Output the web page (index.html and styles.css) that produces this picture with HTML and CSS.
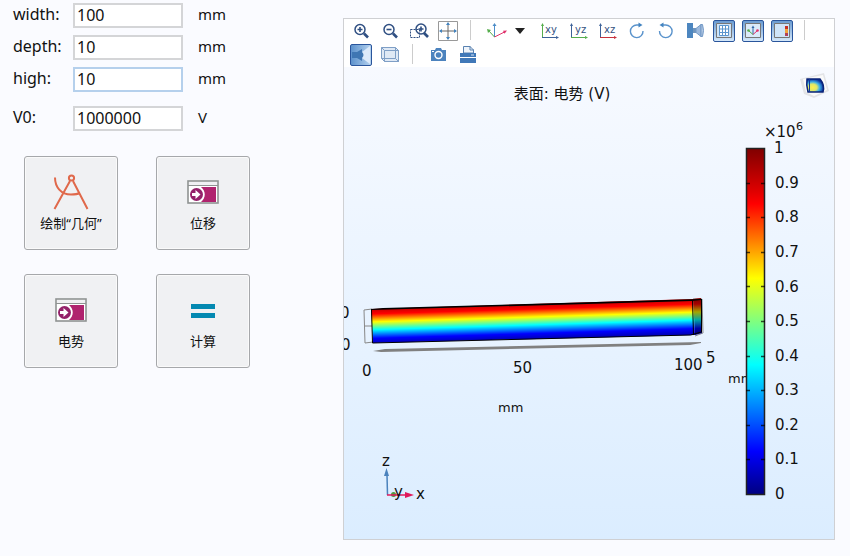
FILE: index.html
```html
<!DOCTYPE html>
<html lang="zh">
<head>
  <meta charset="UTF-8">
  <title>电势</title>
  <link rel="stylesheet" href="styles.css">
</head>
<body>
  <main class="app">
    <section class="side">
      <form class="params">
        <div class="param">
          <label for="width">width:</label>
          <input type="text" id="width" value="100">
          <span class="unit">mm</span>
        </div>
        <div class="param">
          <label for="depth">depth:</label>
          <input type="text" id="depth" value="10">
          <span class="unit">mm</span>
        </div>
        <div class="param">
          <label for="high">high:</label>
          <input type="text" id="high" class="active" value="10">
          <span class="unit">mm</span>
        </div>
        <div class="param voltage">
          <label for="v0">V0:</label>
          <input type="text" id="v0" value="1000000">
          <span class="unit">V</span>
        </div>
      </form>

      <div class="actions">
        <button type="button" class="action">
          <svg width="36" height="38" viewBox="0 0 36 38" fill="none" stroke="#e0694b" stroke-width="2">
            <circle cx="18.500" cy="5" r="2.600"/>
            <path d="M17 8 1.500 36M20 8l14.500 28M2 4.500C2 14 8 21.500 18 21.500c3 0 6 0 9-1.500"/>
          </svg>
          <span>绘制“几何”</span>
        </button>
        <button type="button" class="action">
          <svg width="32" height="38" viewBox="0 0 32 38">
            <rect x="1" y="8" width="30" height="22" fill="#fff" stroke="#8f9392" stroke-width="1.6"/>
            <path d="M2 9h28v3H2z" fill="#f0f1f3"/>
            <path d="M1 12.5h30" stroke="#8f9392"/>
            <path d="M14 14h15v15H14c5-4 5-11 0-15z" fill="#b0236e"/>
            <circle cx="9.500" cy="21.5" r="6.5" fill="#94216a"/>
            <path d="M5 20h3.500v-3l5 4.500-5 4.500v-3H5z" fill="#fff"/>
          </svg>
          <span>位移</span>
        </button>
        <button type="button" class="action">
          <svg width="32" height="38" viewBox="0 0 32 38">
            <rect x="1" y="8" width="30" height="22" fill="#fff" stroke="#8f9392" stroke-width="1.6"/>
            <path d="M2 9h28v3H2z" fill="#f0f1f3"/>
            <path d="M1 12.5h30" stroke="#8f9392"/>
            <path d="M14 14h15v15H14c5-4 5-11 0-15z" fill="#b0236e"/>
            <circle cx="9.500" cy="21.5" r="6.5" fill="#94216a"/>
            <path d="M5 20h3.500v-3l5 4.500-5 4.500v-3H5z" fill="#fff"/>
          </svg>
          <span>电势</span>
        </button>
        <button type="button" class="action">
          <svg width="24" height="38" viewBox="0 0 24 38" fill="#0489b1">
            <path d="M0 13h24v5H0zM0 22h24v5H0z"/>
          </svg>
          <span>计算</span>
        </button>
      </div>
    </section>

    <section class="graphics">
      <div class="toolbar">
        <div class="tools">
          <button type="button" class="tool" aria-label="Zoom in">
            <svg viewBox="0 0 22 22" fill="none" stroke="#2f4f82"><circle cx="10" cy="9.500" r="5" stroke-width="1.500"/><path d="M7.500 9.500h5M10 7v5" stroke-width="1.600"/><path d="M14 13.500l4 4" stroke-width="2.600"/></svg>
          </button>
          <button type="button" class="tool" aria-label="Zoom out">
            <svg viewBox="0 0 22 22" fill="none" stroke="#2f4f82"><circle cx="10" cy="9.500" r="5" stroke-width="1.500"/><path d="M7.500 9.500h5" stroke-width="1.600"/><path d="M14 13.500l4 4" stroke-width="2.600"/></svg>
          </button>
          <button type="button" class="tool" aria-label="Zoom box">
            <svg viewBox="0 0 22 22" fill="none" stroke="#2f4f82"><path d="M2.500 9.500h9v8h-9z" stroke-dasharray="2 1"/><circle cx="13" cy="9" r="5" stroke-width="1.500"/><path d="M10.500 9h5M13 6.500v5" stroke-width="1.600"/><path d="M16 13l4 4" stroke-width="2.600"/></svg>
          </button>
          <button type="button" class="tool" aria-label="Zoom extents">
            <svg viewBox="0 0 22 22"><path d="M1.500 1.500h19v19h-19z" fill="#fff" stroke="#999"/><path d="M3 11h16M11 3v16" stroke="#666"/><path d="M2 11l3-2v4zM20 11l-3-2v4zM11 2l-2 3h4zM11 20l-2-3h4z" fill="#4384c0"/></svg>
          </button>
          <span class="sep"></span>
          <button type="button" class="tool" aria-label="Default view">
            <svg viewBox="0 0 22 22" fill="none"><path d="M8.500 17V4" stroke="#4d8dc8"/><path d="M8.500 17L2.500 10.500" stroke="#55ad4c"/><path d="M8.500 17L19.500 11.500" stroke="#e0316b"/><path d="M6.500 6l2-3 2 3z" fill="#4d8dc8"/><path d="M1 9l4 1-3 3z" fill="#55ad4c"/><path d="M21 10.500l-4 .2 1.500 3z" fill="#e0316b"/></svg>
          </button>
          <button type="button" class="tool drop" aria-label="View list">
            <svg viewBox="0 0 10 22"><path d="M0 8h10l-5 6z" fill="#222"/></svg>
          </button>
          <button type="button" class="tool" aria-label="XY view">
            <svg viewBox="0 0 22 22"><path d="M3.500 17V4" stroke="#55ad4c"/><path d="M2 6l1.500-3L5 6z" fill="#55ad4c"/><path d="M3 17.500h14" stroke="#3d6299"/><path d="M17 16l3 1.500-3 1.500z" fill="#3d6299"/><text x="6" y="13">xy</text></svg>
          </button>
          <button type="button" class="tool" aria-label="YZ view">
            <svg viewBox="0 0 22 22"><path d="M3.500 17V4" stroke="#3d6299"/><path d="M2 6l1.500-3L5 6z" fill="#3d6299"/><path d="M3 17.500h14" stroke="#55ad4c"/><path d="M17 16l3 1.500-3 1.500z" fill="#55ad4c"/><text x="7" y="13">yz</text></svg>
          </button>
          <button type="button" class="tool" aria-label="XZ view">
            <svg viewBox="0 0 22 22"><path d="M3.500 17V4" stroke="#3d6299"/><path d="M2 6l1.500-3L5 6z" fill="#3d6299"/><path d="M3 17.500h14" stroke="#c8323c"/><path d="M17 16l3 1.500-3 1.500z" fill="#c8323c"/><text x="7" y="13">xz</text></svg>
          </button>
          <button type="button" class="tool" aria-label="Rotate clockwise">
            <svg viewBox="0 0 22 22" fill="none"><path d="M17 11a6.300 6.300 0 1 1-6-6h3" stroke="#5a93cc" stroke-width="1.400"/><path d="M12.500 2.500l4 2.500-4 2.500z" fill="#4384c0"/></svg>
          </button>
          <button type="button" class="tool" aria-label="Rotate counterclockwise">
            <svg viewBox="0 0 22 22" fill="none"><path d="M4.500 11a6.300 6.300 0 1 0 6-6h-3" stroke="#5a93cc" stroke-width="1.400"/><path d="M8.500 2.500l-4 2.500 4 2.500z" fill="#4384c0"/></svg>
          </button>
          <button type="button" class="tool" aria-label="Camera">
            <svg viewBox="0 0 22 22"><path d="M3 3h6v15H3z" fill="#4d86bf"/><path d="M9 8h3v5H9z" fill="#6f95bd"/><path d="M12 8.500l5-4v12l-5-4z" fill="#9db9dc" stroke="#7299c6"/><path d="M17 4.500h1.500q2 6 0 12H17z" fill="#b4c9e5" stroke="#7299c6"/></svg>
          </button>
          <button type="button" class="tool pressed" aria-label="Show grid">
            <svg viewBox="0 0 20 20"><path d="M2.500 2.500h15v14h-15z" fill="#cfe4f8" stroke="#777"/><path d="M5.500 4.500h9v10h-9zM8.500 4.500v10M11.500 4.500v10M5.500 8h9M5.500 11.500h9" fill="#fff" stroke="#5b95cd"/></svg>
          </button>
          <button type="button" class="tool pressed" aria-label="Show axis orientation">
            <svg viewBox="0 0 20 20"><path d="M2.500 2.500h15v14h-15z" fill="#dbeafa" stroke="#777"/><path d="M10 13.500V6" stroke="#2f66a8"/><path d="M8.500 7L10 4.500 11.500 7z" fill="#2f66a8"/><path d="M10 13.500L6 10" stroke="#55ad4c"/><circle cx="5.500" cy="9.500" r="1.300" fill="#55ad4c"/><path d="M10 13.500l4-3.500" stroke="#e0316b"/><circle cx="14.500" cy="9.500" r="1.300" fill="#e0316b"/></svg>
          </button>
          <button type="button" class="tool pressed" aria-label="Show legend">
            <svg viewBox="0 0 20 20"><path d="M2.500 2.500h15v14h-15z" fill="#cfe4f8" stroke="#777"/><path d="M13 5h3v3h-3z" fill="#c62f22"/><path d="M13 8h3v4h-3z" fill="#f2a33a"/><path d="M13 12h3v3h-3z" fill="#b0405c"/></svg>
          </button>
          <span class="sep"></span>
        </div>
        <div class="tools">
          <button type="button" class="tool pressed light" aria-label="Scene light">
            <svg viewBox="0 0 20 20"><path d="M19 1v18l-8-6V7z" fill="#dceafa"/><path d="M1 7h5l5-3v12l-5-3H1z" fill="#3f76b3"/><path d="M11 7q3 3 0 6z" fill="#3f76b3"/></svg>
          </button>
          <button type="button" class="tool" aria-label="Transparency">
            <svg viewBox="0 0 22 22"><path d="M2.500 3.500h14l3 3v11h-14l-3-3z" fill="#dfe9f5" stroke="#7f9fc6"/><path d="M5.500 6.500h14v11h-14zM2.500 3.500l3 3M16.500 3.500v11h-14M16.500 14.500l3 3" fill="none" stroke="#7f9fc6"/></svg>
          </button>
          <span class="sep"></span>
          <button type="button" class="tool" aria-label="Image snapshot">
            <svg viewBox="0 0 22 22"><path d="M3 6h4l1-2h5l1 2h4v11H3z" fill="#4c83be"/><circle cx="10.500" cy="11" r="3.500" fill="#4c83be" stroke="#fff" stroke-width="1.400"/><path d="M4 7h2v1H4z" fill="#fff"/></svg>
          </button>
          <button type="button" class="tool" aria-label="Print">
            <svg viewBox="0 0 22 22"><path d="M6.500 9V2.500H13L16.500 6v3z" fill="#eef4fb" stroke="#5a82b0"/><path d="M13 2v4h4" fill="none" stroke="#5a82b0"/><path d="M3 9h16v4H3zM3 14h16v5H3z" fill="#4078b8"/><path d="M14 11h3" stroke="#cfe0f3"/></svg>
          </button>
        </div>
      </div>

      <svg class="plot" viewBox="0 0 490 472" role="img" aria-label="表面: 电势 (V)">
        <defs>
          <linearGradient id="rainbow" x1="0" y1="0" x2="0" y2="1">
            <stop offset="0" stop-color="#800000"/>
            <stop offset=".125" stop-color="#e00000"/>
            <stop offset=".16" stop-color="#f00"/>
            <stop offset=".375" stop-color="#ff0"/>
            <stop offset=".625" stop-color="#0ff"/>
            <stop offset=".875" stop-color="#00f"/>
            <stop offset="1" stop-color="#000080"/>
          </linearGradient>
          <linearGradient id="surface" gradientUnits="userSpaceOnUse" x1="27" y1="243" x2="28" y2="276">
            <stop offset="0" stop-color="#d00000"/>
            <stop offset=".12" stop-color="#f00"/>
            <stop offset=".36" stop-color="#ff0"/>
            <stop offset=".6" stop-color="#0ff"/>
            <stop offset=".86" stop-color="#00f"/>
            <stop offset="1" stop-color="#0000c0"/>
          </linearGradient>
          <radialGradient id="logo" cx=".35" cy=".65" r=".65">
            <stop offset="0" stop-color="#fff04a"/>
            <stop offset=".4" stop-color="#dce66a"/>
            <stop offset=".65" stop-color="#3fb0e6"/>
            <stop offset="1" stop-color="#0a2f9c"/>
          </radialGradient>
        </defs>

        <text class="label" x="218" y="32" text-anchor="middle">表面: 电势 (V)</text>

        <!-- logo -->
        <path d="M456 12l24-6 5 18-15 7-10-4z" fill="#e3e4e7"/>
        <path d="M459 12l20-4 4 15-13 6-8-4z" fill="#fafafa"/>
        <path d="M463 12h13q5 6 3 13h-15q-2-7-1-13z" fill="url(#logo)" stroke="#0b2478" stroke-width="1.500"/>
        <path d="M465.500 12v13" stroke="#12389a"/>

        <!-- bounding frame -->
        <path d="M28 242l-8 1 1 33 8-1M20 259h8M349 232h9l1 34-8 3" fill="none" stroke="#888"/>

        <!-- shadow -->
        <path d="M29 284l12-2 316-7v1l-11 2-309 7z" fill="#808080"/>

        <!-- surface -->
        <path d="M27 242l322-10 2 36-322 8z" fill="url(#surface)"/>
        <path d="M349 232l8-1 1 35-7 2z" fill="url(#surface)"/>
        <path d="M349 232l8-1 1 35-7 2z" fill="#000" fill-opacity=".35"/>
        <path d="M27 242l12-1 318-9v1l-9 1-321 9z" fill="#000"/>
        <path d="M27.500 243l1 33 318-8 11-3v-33M348.500 233l1 35" fill="none" stroke="#000"/>

        <text class="label" x="-4" y="251">0</text>
        <text class="label" x="-3" y="283">0</text>
        <text class="label" x="18" y="309">0</text>
        <text class="label" x="169" y="306">50</text>
        <text class="label" x="330" y="303">100</text>
        <text class="label" x="362" y="296">5</text>
        <text class="unit-label" x="154" y="345">mm</text>
        <text class="unit-label" x="384" y="316">mm</text>

        <!-- color legend -->
        <rect x="402.5" y="81.500" width="18" height="346" fill="url(#rainbow)" stroke="#222" stroke-width="1.500"/>
        <path d="M402 116.500h4m11 0h4M402 150.500h4m11 0h4M402 185.500h4m11 0h4M402 219.500h4m11 0h4M402 254.500h4m11 0h4M402 289.500h4m11 0h4M402 323.500h4m11 0h4M402 358.500h4m11 0h4M402 392.500h4m11 0h4" stroke="#000" stroke-opacity=".7" stroke-width="1.500"/>
        <text class="label" x="420" y="70">×10</text>
        <text class="power" x="452" y="63">6</text>
        <text class="label" x="430" y="86">1</text>
        <text class="label" x="431" y="121">0.9</text>
        <text class="label" x="431" y="155">0.8</text>
        <text class="label" x="431" y="190">0.7</text>
        <text class="label" x="431" y="225">0.6</text>
        <text class="label" x="431" y="259">0.5</text>
        <text class="label" x="431" y="294">0.4</text>
        <text class="label" x="431" y="328">0.3</text>
        <text class="label" x="431" y="363">0.2</text>
        <text class="label" x="431" y="397">0.1</text>
        <text class="label" x="431" y="432">0</text>

        <!-- axis triad -->
        <path d="M43.500 428L43 408" stroke="#4a82bd" stroke-width="1.500"/>
        <path d="M40 409l2.500-8 2.500 8z" fill="#4a82bd"/>
        <circle cx="49.500" cy="427.500" r="2.500" fill="#4f9a40"/>
        <path d="M43 428h18" stroke="#e0185c" stroke-width="1.500"/>
        <path d="M61 425l9 3-9 3z" fill="#e0185c"/>
        <text class="label" x="38" y="399">z</text>
        <text class="label" x="50" y="430">y</text>
        <text class="label" x="72" y="432">x</text>
      </svg>
    </section>
  </main>
</body>
</html>
```

FILE: styles.css
```css
* { box-sizing: border-box; }
body { margin: 0; background: #fafbff; color: #111; font: 16px/22px "Noto Sans", "Noto Sans CJK SC", sans-serif; }

.app { display: flex; align-items: flex-start; }
.side { flex: 0 0 343px; padding: 3px 0 0 13px; }

.params { display: flex; flex-direction: column; gap: 7px; }
.param { display: grid; grid-template-columns: 60px 110px auto; align-items: start; }
.param input { width: 100%; height: 25px; padding: 0 2px 2px; border: 2px solid #d4d5d7; background: #fff; color: #111; font: inherit; outline: none; }
.param input.active { border-color: #b5d0ec; }
.unit { padding-left: 15px; font-size: 15px; }
.voltage { margin-top: 7px; }

.actions { display: grid; grid-template-columns: 94px 94px; gap: 24px 38px; margin: 25px 0 0 11px; }
.action { display: flex; flex-direction: column; align-items: center; justify-content: center; gap: 2px; height: 94px; padding: 0; border: 1px solid #a6a8ab; border-radius: 3px; background: #f0f1f3; box-shadow: inset 0 0 0 1px #fafafa; color: #111; font: 13px/20px "Noto Sans", "Noto Sans CJK SC", sans-serif; }

.graphics { flex: 1; min-width: 0; margin: 18px 15px 16px 0; border: 1px solid #cfd0d3; background: linear-gradient(#fafbff, #dbedff); }
.toolbar { display: flex; flex-direction: column; gap: 2px; padding: 1px 6px; background: #fff; }
.tools { display: flex; gap: 7px; }
.tool { flex: 0 0 22px; height: 22px; padding: 0; border: 0; background: none; }
.tool svg { display: block; width: 100%; height: 100%; }
.tool text { fill: #33527f; font: 10px "DejaVu Sans", sans-serif; }
.drop { flex-basis: 17px; }
.drop svg { width: 10px; }
.pressed { border: 1px solid #2a559c; border-radius: 2px; background: linear-gradient(#6a9bd0, #d5e8fa); }
.light { background: linear-gradient(90deg, #5d92cc, #b5d2ef); }
.sep { flex: 0 0 13px; height: 20px; background: linear-gradient(#ccc, #ccc) 4px 0 / 1px 100% no-repeat; }

.plot { display: block; width: 100%; height: auto; overflow: hidden; }
.label { fill: #111; font: 15px "DejaVu Sans", "Noto Sans CJK SC", sans-serif; }
.unit-label { fill: #111; font: 13px "DejaVu Sans", sans-serif; }
.power { fill: #111; font: 11px "DejaVu Sans", sans-serif; }
```
